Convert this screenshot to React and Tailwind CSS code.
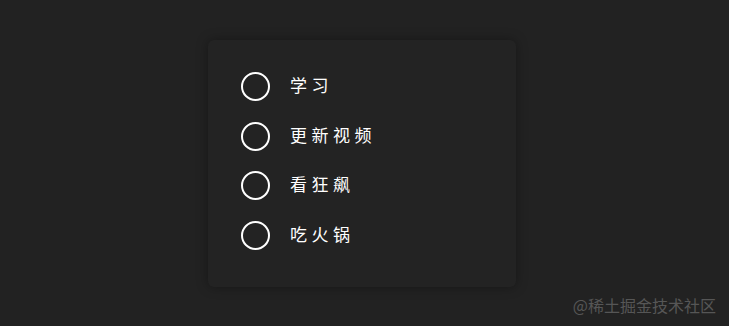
import React from "react";

const items = ["学习", "更新视频", "看狂飙", "吃火锅"];

export default function App() {
  return (
    <div
      className="relative w-full h-[326px] bg-[#222222] flex items-center justify-center"
      style={{ fontFamily: '"Noto Sans CJK SC", "Noto Sans", sans-serif' }}
    >
      <div className="w-[308px] h-[247px] bg-[#232323] rounded-md shadow-[0_0_12px_rgba(0,0,0,0.35)] pl-[33px] pt-[33px] flex flex-col gap-[21.5px] -ml-[5px]">
        {items.map((t) => (
          <div key={t} className="flex items-center h-[28px]">
            <div className="w-[29px] h-[29px] rounded-full border-2 border-white shrink-0" />
            <span className="ml-[20px] -mt-[4px] text-white text-[17px] tracking-[4.5px] leading-none font-normal">
              {t}
            </span>
          </div>
        ))}
      </div>
      <div className="absolute right-[13px] bottom-[13px] text-[16px] leading-none text-[#565656]">
        @稀土掘金技术社区
      </div>
    </div>
  );
}
